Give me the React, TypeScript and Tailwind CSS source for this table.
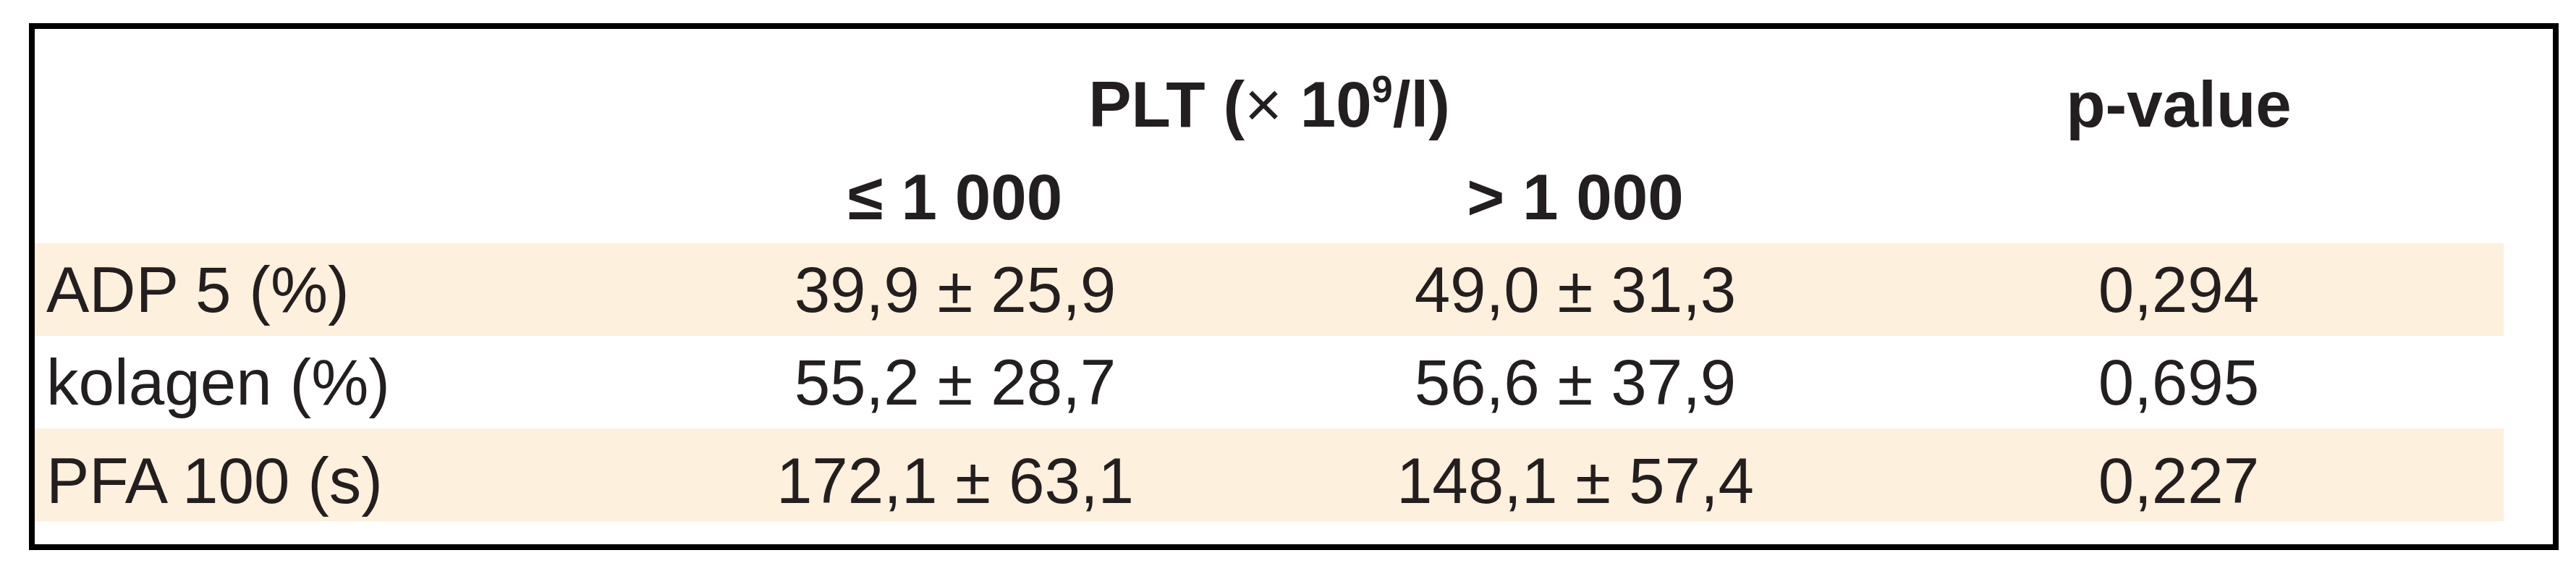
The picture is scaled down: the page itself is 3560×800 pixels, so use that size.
import React from 'react';

const cols = 'grid grid-cols-[832px_880px_834px_866px]';

const rows = [
  { label: 'ADP 5 (%)', low: '39,9 ± 25,9', high: '49,0 ± 31,3', p: '0,294', band: true, shift: '' },
  { label: 'kolagen (%)', low: '55,2 ± 28,7', high: '56,6 ± 37,9', p: '0,695', band: false, shift: '' },
  { label: 'PFA 100 (s)', low: '172,1 ± 63,1', high: '148,1 ± 57,4', p: '0,227', band: true, shift: 'pt-[8px]' },
];

const App: React.FC = () => {
  return (
    <div className="min-h-[800px] w-[3560px] bg-white pt-[32px] pl-[40px] font-['Liberation_Sans',Arial,sans-serif] text-[#231f20]">
      <div className="flex h-[728px] w-[3496px] flex-col border-8 border-black bg-white pr-[68px]">
        {/* header */}
        <div className={`${cols} pt-[40px] text-[89px] font-bold leading-[128px]`}>
          <div />
          <div className="col-span-2 pl-[34px] text-center">
            PLT (<span className="font-normal">×</span> 10
            <span className="text-[52px] leading-none align-[34px]">9</span>/l)
          </div>
          <div className="pr-[32px] text-center">p-value</div>
          <div />
          <div className="text-center">≤ 1 000</div>
          <div className="text-center">&gt; 1 000</div>
          <div />
        </div>

        {/* body */}
        <div className="flex flex-col text-[89px] leading-[128px]">
          {rows.map((r) => (
            <div key={r.label} className={`${cols} h-[128px] ${r.band ? 'bg-[#fdf0dc]' : 'bg-white'}`}>
              <div className={`pl-[16px] ${r.shift}`}>{r.label}</div>
              <div className={`text-center ${r.shift}`}>{r.low}</div>
              <div className={`text-center ${r.shift}`}>{r.high}</div>
              <div className={`pr-[32px] text-center ${r.shift}`}>{r.p}</div>
            </div>
          ))}
        </div>
      </div>
    </div>
  );
};

export default App;
